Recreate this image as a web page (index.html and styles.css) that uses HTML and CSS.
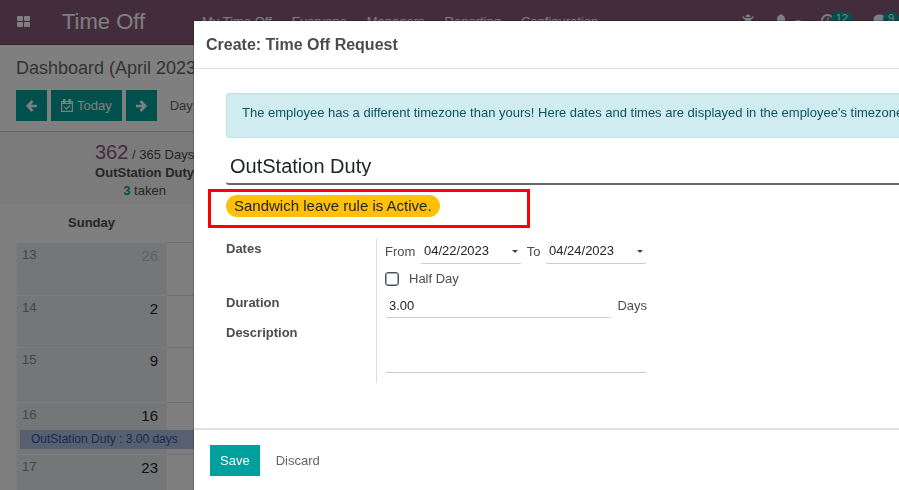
FILE: index.html
```html
<!DOCTYPE html>
<html lang="en">
<head>
<meta charset="utf-8">
<title>Time Off</title>
<link rel="stylesheet" href="styles.css">
</head>
<body>
<div class="app">
  <header class="navbar">
    <a class="apps" href="#" aria-label="Apps">
      <svg width="13" height="11" viewBox="0 0 13 11" fill="currentColor"><rect x="0" y="0" width="6" height="5" rx="1"/><rect x="7" y="0" width="6" height="5" rx="1"/><rect x="0" y="6" width="6" height="5" rx="1"/><rect x="7" y="6" width="6" height="5" rx="1"/></svg>
    </a>
    <a class="brand" href="#">Time Off</a>
    <nav class="menu">
      <a href="#">My Time Off</a>
      <a href="#">Everyone</a>
      <a href="#">Managers</a>
      <a href="#">Reporting</a>
      <a href="#">Configuration</a>
    </nav>
    <div class="systray">
      <a class="tray-bug" href="#" aria-label="Debug">
        <svg width="12" height="14" viewBox="0 0 12 14" fill="currentColor"><path d="M3.500 3a2.500 2.500 0 0 1 5 0z"/><path d="M3 4h6v6a3 3 0 0 1-6 0z"/><path d="M.5 2.500L3 5M11.500 2.500L9 5M0 8h12M1 13l3-3M11 13l-3-3" stroke="currentColor" stroke-width="1.300" fill="none"/></svg>
      </a>
      <a class="tray-bell" href="#" aria-label="Alerts">
        <svg width="10" height="14" viewBox="0 0 10 14" fill="currentColor"><path d="M5 0a1 1 0 0 1 1 1c2 .5 3 2 3 4.500 0 3 .5 4 1 5H0c.5-1 1-2 1-5C1 3 2 1.500 4 1a1 1 0 0 1 1-1zM3.500 11.500h3a1.500 1.500 0 0 1-3 0z"/></svg>
        <svg width="6" height="4" viewBox="0 0 6 4" fill="currentColor"><path d="M0 0h6L3 4z"/></svg>
      </a>
      <a class="tray-clock" href="#" aria-label="Activities">
        <svg width="13" height="13" viewBox="0 0 13 13" fill="none" stroke="currentColor" stroke-width="2"><circle cx="6.500" cy="6.500" r="5.500"/><path d="M7 3v4H4.500" stroke-width="1"/></svg>
        <span class="count">12</span>
      </a>
      <a href="#" aria-label="Messages">
        <svg width="13" height="12" viewBox="0 0 13 12" fill="currentColor"><ellipse cx="6.500" cy="5" rx="6" ry="4.500"/><path d="M3 8l-2 4 5-3z"/></svg>
        <span class="count">9</span>
      </a>
    </div>
  </header>

  <section class="control">
    <h1>Dashboard (April 2023)</h1>
    <div class="buttons">
      <button class="teal arrow" aria-label="Previous"><svg width="11" height="12" viewBox="0 0 11 12" fill="none" stroke="currentColor" stroke-width="2.600"><path d="M6.500 1L1.800 6L6.500 11M2 6H11"/></svg></button>
      <button class="teal today"><svg width="12" height="13" viewBox="0 0 12 13" fill="none" stroke="currentColor" stroke-width="1.200"><path d="M.6 2.500h10.800v9.900H.6zM.6 4.500h10.800M3.500 8l2 2 3.500-3.500"/><path d="M2.600.6h1.300v2.800H2.600zM8.100.6h1.300v2.800H8.100z"/></svg>Today</button>
      <button class="teal arrow" aria-label="Next"><svg width="11" height="12" viewBox="0 0 11 12" fill="none" stroke="currentColor" stroke-width="2.600"><path d="M4.500 1L9.200 6L4.500 11M9 6H0"/></svg></button>
      <button class="scale">Day</button>
    </div>
  </section>

  <section class="summary">
    <div class="quota">
      <div><span class="left">362</span> / 365 Days</div>
      <strong>OutStation Duty</strong>
      <div><b>3</b> taken</div>
    </div>
  </section>

  <table class="calendar">
    <thead><tr><th>Sunday</th><th>Monday</th></tr></thead>
    <tbody>
      <tr><td><div class="day"><span class="wk">13</span><span class="out">26</span></div></td><td></td></tr>
      <tr><td><div class="day"><span class="wk">14</span><span>2</span></div></td><td></td></tr>
      <tr class="tall"><td><div class="day"><span class="wk">15</span><span>9</span></div></td><td></td></tr>
      <tr><td><div class="day"><span class="wk">16</span><span>16</span></div><a class="event" href="#">OutStation Duty : 3.00 days</a></td><td></td></tr>
      <tr><td><div class="day"><span class="wk">17</span><span>23</span></div></td><td></td></tr>
    </tbody>
  </table>
</div>

<div class="backdrop">
  <div class="dialog" role="dialog" aria-labelledby="dlg-title">
    <h2 class="dialog-title" id="dlg-title">Create: Time Off Request</h2>
    <form class="dialog-body">
      <div class="alert">The employee has a different timezone than yours! Here dates and times are displayed in the employee's timezone.</div>
      <select class="leave-type" aria-label="Time off type"><option>OutStation Duty</option></select>
      <div class="rule"><span class="pill">Sandwich leave rule is Active.</span></div>
      <div class="group">
        <div class="labels">
          <label class="l-dates" for="from">Dates</label>
          <label class="l-duration" for="duration">Duration</label>
          <label for="description">Description</label>
        </div>
        <div class="fields">
          <div class="dates">
            <label for="from">From</label>
            <span class="date"><input id="from" type="text" value="04/22/2023"><i class="caret"></i></span>
            <label for="to">To</label>
            <span class="date"><input id="to" type="text" value="04/24/2023"><i class="caret"></i></span>
          </div>
          <div class="half"><input id="half" type="checkbox"><label for="half">Half Day</label></div>
          <div class="duration"><input id="duration" type="text" value="3.00"><span>Days</span></div>
          <textarea id="description"></textarea>
        </div>
      </div>
    </form>
    <footer class="dialog-footer">
      <button class="teal save">Save</button>
      <button class="discard">Discard</button>
    </footer>
  </div>
</div>
</body>
</html>
```

FILE: styles.css
```css
* { box-sizing: border-box; }
body {
  margin: 0;
  height: 100vh;
  overflow: hidden;
  font: 13px/20px "Liberation Sans", Arial, sans-serif;
  color: #4c4c4c;
  background: #fff;
}
a { color: inherit; text-decoration: none; }
button, input, select, textarea { font: inherit; color: inherit; margin: 0; border: 0; border-radius: 0; background: none; outline: 0; }
button { padding: 0; cursor: pointer; }
svg { display: block; flex: none; }

.navbar {
  display: flex;
  align-items: center;
  height: 45px;
  padding-left: 17px;
  color: #fff;
  background: #875a7b;
  border-bottom: 1px solid #68465f;
}
.apps { width: 45px; margin-top: -2px; }
.brand { width: 130px; font-size: 22px; }
.menu { display: flex; }
.menu a { padding: 0 10px; }
.systray { display: flex; align-items: flex-start; height: 32px; margin-left: auto; padding-top: 8px; }
.systray a { display: flex; align-items: flex-start; }
.tray-bug { margin-right: 22px; }
.tray-bell { gap: 9px; margin-right: 20px; }
.tray-bell svg:last-child { margin-top: 6px; }
.tray-clock { margin-right: 20px; }
.count {
  height: 14px;
  margin: -2px 0 0 -3px;
  padding: 0 5px;
  border-radius: 7px;
  font-size: 11px;
  line-height: 12px;
  background: #00a09d;
}

.control { height: 87px; padding: 13px 16px 0; border-bottom: 1px solid #ccc; }
.control h1 { margin: 0 0 12px; font-size: 18px; font-weight: 400; line-height: 20px; color: #666; white-space: nowrap; }
.buttons { display: flex; gap: 4px; }
.teal { display: flex; align-items: center; justify-content: center; height: 31px; color: #fff; background: #00a09d; }
.arrow { width: 31px; }
.today { gap: 4px; padding: 0 10px; }
.scale { padding: 0 9px; color: #666; }

.summary { display: flex; height: 72px; padding: 10px 95px 0; background: #f6f6f6; }
.quota { text-align: center; white-space: nowrap; line-height: 18px; }
.quota > * { display: block; }
.left { font-size: 20px; line-height: 20px; color: #875a7b; }
.quota b { color: #00a09d; }

.calendar { width: 100%; table-layout: fixed; border-collapse: separate; border-spacing: 0; padding-left: 16px; background: #fdfdfd; }
.calendar th { height: 38px; padding: 0; font-weight: 700; color: #4c4c4c; }
.calendar th:first-child { width: 151px; }
.calendar td { height: 52px; padding: 0; vertical-align: top; border-top: 1px solid #e3e3e3; border-right: 1px solid #f3f3f3; }
.calendar td:first-child { background: #eaecf0; border-left: 1px solid #f3f3f3; border-top-color: #f8f8f8; }
.calendar tbody tr:first-child td { height: 53px; }
.calendar .tall td { height: 55px; }
.day { display: flex; justify-content: space-between; padding: 2px 8px 0 5px; font-size: 15px; color: #212529; }
.day > :last-child { padding-top: 1px; }
.day .wk { font-size: 13px; color: #8a8a8a; }
.day .out { color: #c4c4c4; }
.event { display: block; position: relative; width: 300px; height: 19px; margin: 4px 0 0 3px; padding-left: 11px; font-size: 12px; line-height: 19px; color: #34559b; background: #acc0e2; }

.backdrop { position: fixed; inset: 0; overflow: hidden; padding: 21px 0 0 194px; background: rgba(0, 0, 0, .5); }
.dialog { width: calc(100% + 60px); min-height: 100%; background: #fff; box-shadow: 0 0 0 1px rgba(0, 0, 0, .2); }
.dialog-title { margin: 0; padding: 12px 12px 11px; font-size: 16px; line-height: 24px; color: #4c4c4c; border-bottom: 1px solid #dee2e6; }
.dialog-body { padding: 24px 32px 0; }
.alert { height: 45px; padding: 9px 15px; white-space: nowrap; color: #0c5460; background: #d1ecf1; border: 1px solid #bee5eb; border-radius: 3px; }
.leave-type { display: block; width: 100%; height: 35px; margin-top: 12px; padding: 0 4px 2px; appearance: none; font-size: 20px; color: #212529; border-bottom: 2px solid #666; border-radius: 3px; }
.rule { display: flex; width: 322px; height: 39px; margin: 4px 0 0 -18px; padding: 3px 15px; border: 3px solid #f00; }
.pill { height: 22px; padding: 0 8px; border-radius: 11px; font-size: 15px; line-height: 22px; color: #212529; background: #ffc107; white-space: nowrap; }
.group { display: flex; margin-top: 11px; }
.labels { display: flex; flex-direction: column; width: 150px; font-weight: 700; }
.l-dates { height: 54px; }
.l-duration { height: 30px; }
.fields { width: 271px; height: 144px; padding-left: 8px; border-left: 1px solid #ddd; }
.dates { display: flex; align-items: center; justify-content: space-between; }
.date { display: flex; align-items: center; width: 102px; height: 25px; padding: 0 4px; color: #212529; border-bottom: 1px solid #ccc; border-radius: 3px; }
.date input { flex: 1; min-width: 0; padding: 0; }
.caret { border: 3px solid transparent; border-top-color: #444; border-bottom: 0; }
.half { display: flex; align-items: center; gap: 10px; height: 30px; }
.half input { appearance: none; width: 14px; height: 14px; border: 1px solid #495057; border-radius: 3px; box-shadow: 0 0 0 1px #a5a9ad inset; }
.duration { display: flex; align-items: center; gap: 6px; }
.duration input { flex: 1; min-width: 0; height: 24px; padding: 0 4px; color: #212529; border-bottom: 1px solid #ccc; border-radius: 3px; }
.fields textarea { display: block; width: 100%; height: 49px; margin-top: 6px; padding: 4px; resize: none; border-bottom: 1px solid #ccc; border-radius: 3px; }
.dialog-footer { display: flex; margin-top: 45px; padding: 15px 16px; border-top: 2px solid #dee2e6; }
.save { padding: 0 10px; }
.discard { padding: 0 16px; color: #666; }
```
